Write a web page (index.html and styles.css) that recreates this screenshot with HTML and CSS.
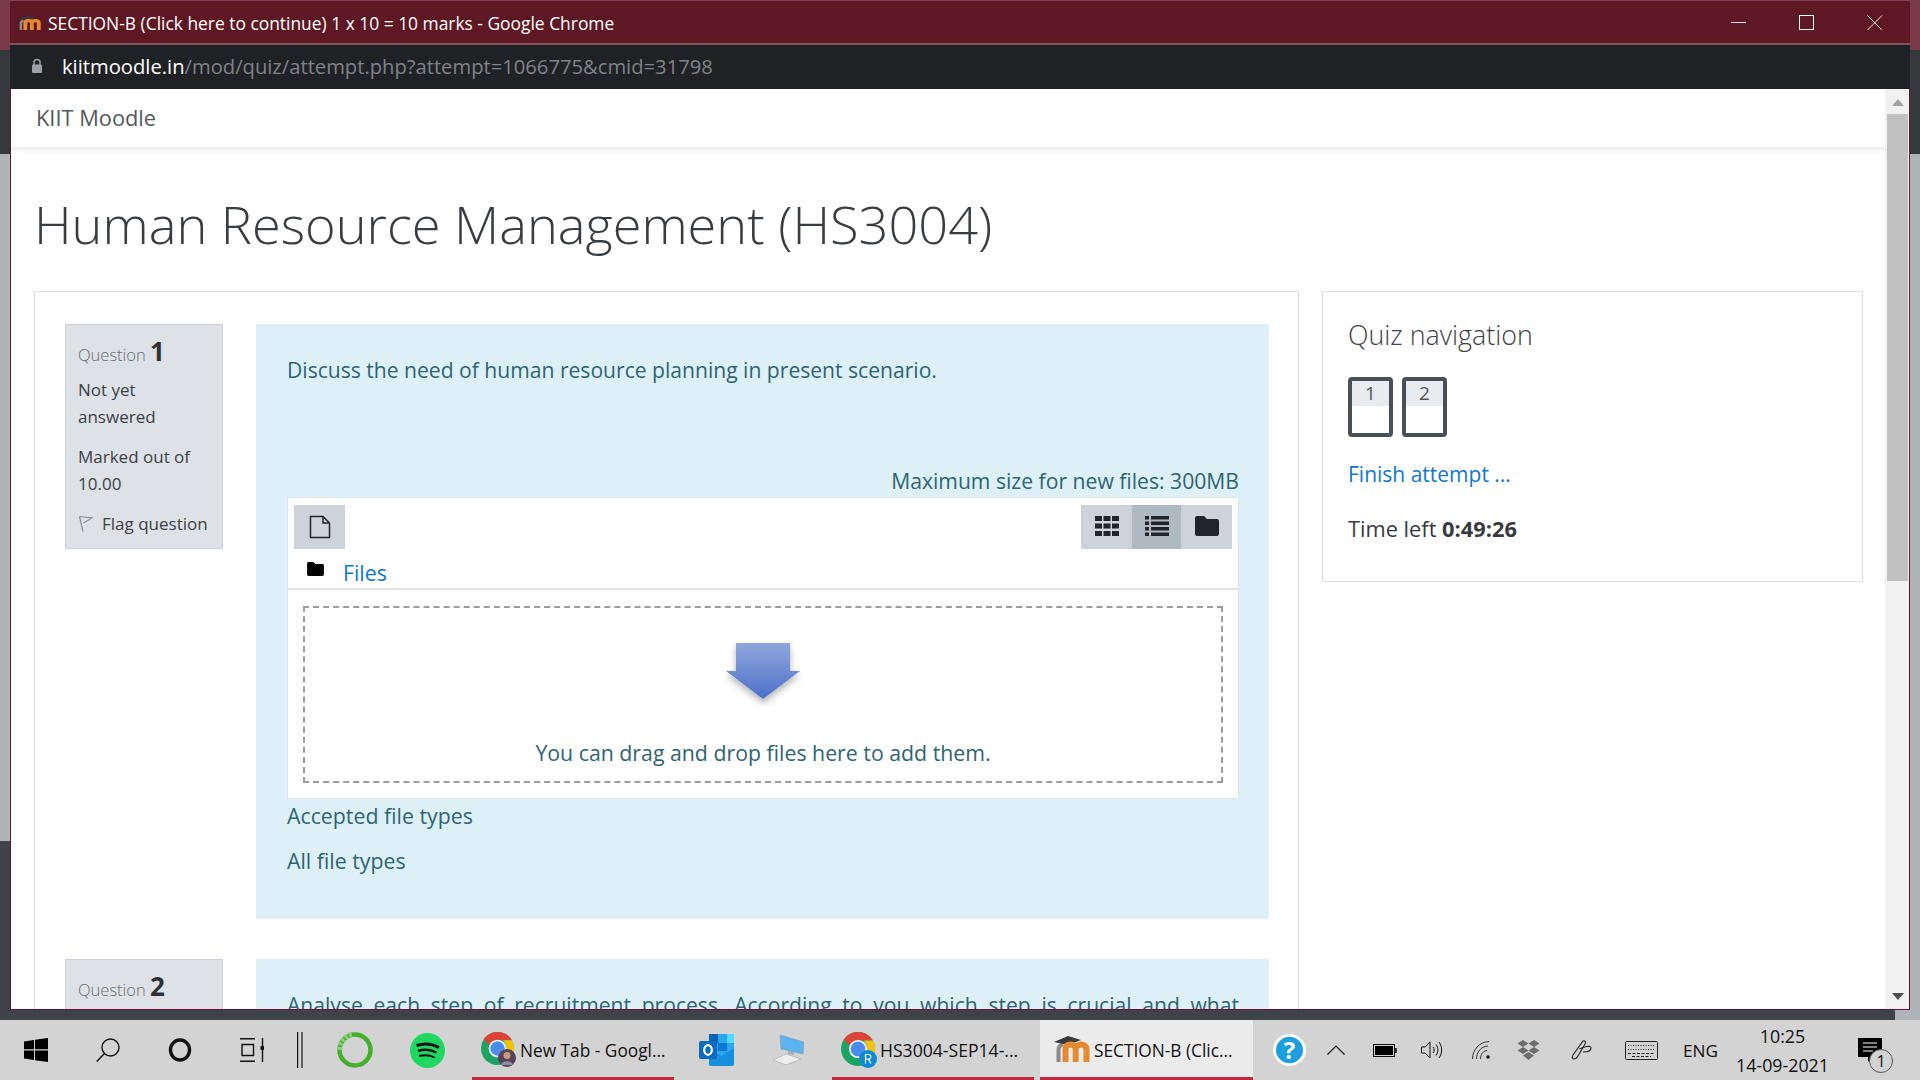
FILE: index.html
```html
<!DOCTYPE html>
<html lang="en">
<head>
<meta charset="utf-8">
<title>SECTION-B (Click here to continue) 1 x 10 = 10 marks</title>
<link rel="stylesheet" href="styles.css">
</head>
<body>
<svg class="defs" width="0" height="0" aria-hidden="true">
  <defs>
    <g id="moodle-m">
      <path d="M4.500 26V14C4.500 11 6.500 9 9 8" fill="none" stroke="#8a8a8a" stroke-width="4"/>
      <path d="M0 6L14 0 27 4 14 9Z" fill="#3a3a3a"/>
      <path d="M11.500 26V13C11.500 10 13.500 8.500 16.500 8.500S21.700 10 21.700 13V26M21.700 13C21.700 10 24 8.500 27 8.500S32.500 10 32.500 13V26" fill="none" stroke="#e68a32" stroke-width="6"/>
    </g>
    <g id="chrome-logo">
      <circle cx="16" cy="16" r="16" fill="#1da462"/>
      <path d="M16 0A16 16 0 0 1 30 8H16A8 8 0 0 0 8.500 13L2.500 7A16 16 0 0 1 16 0Z" fill="#db4437"/>
      <path d="M30 8A16 16 0 0 1 21 31L16 24A8 8 0 0 0 24 16 8 8 0 0 0 21 8Z" fill="#f4c20d"/>
      <circle cx="16" cy="16" r="8.500" fill="#fff"/>
      <circle cx="16" cy="16" r="7" fill="#4a8cf0"/>
    </g>
  </defs>
</svg>
<div class="desktop">
  <main class="window">
    <header class="titlebar">
      <svg class="title-icon" width="23" height="14" viewBox="0 0 36 26" preserveAspectRatio="none"><use href="#moodle-m"/></svg>
      <span class="title-text">SECTION-B (Click here to continue) 1 x 10 = 10 marks - Google Chrome</span>
      <div class="win-controls">
        <svg width="16" height="16" viewBox="0 0 16 16"><path d="M0 7.500H15" stroke="#f3e6e8" fill="none"/></svg>
        <svg width="16" height="16" viewBox="0 0 16 16"><rect x=".5" y=".5" width="14" height="14" stroke="#fff" fill="none"/></svg>
        <svg width="16" height="16" viewBox="0 0 16 16"><path d="M.5.500L15 15M15 .5L.5 15" stroke="#f3e6e8" fill="none"/></svg>
      </div>
    </header>
    <div class="addressbar">
      <svg class="lock" width="12" height="16" viewBox="0 0 12 16"><path d="M3 7V4.500a3 3 0 0 1 6 0V7" fill="none" stroke="#9aa0a6" stroke-width="1.500"/><rect x="1" y="6.500" width="10" height="8.500" rx="1" fill="#9aa0a6"/></svg>
      <span class="url"><span class="url-host">kiitmoodle.in</span>/mod/quiz/attempt.php?attempt=1066775&amp;cmid=31798</span>
    </div>
    <div class="viewport">
      <div class="page">
        <nav class="navbar">KIIT Moodle</nav>
        <h1 class="course-title">Human Resource Management (HS3004)</h1>
        <div class="columns">
          <section class="quiz-card">
            <article class="question">
              <aside class="q-info">
                <h3 class="q-no"><span class="q-label">Question</span> <b>1</b></h3>
                <p class="q-state">Not yet answered</p>
                <p class="q-grade">Marked out of 10.00</p>
                <p class="q-flag">
                  <svg width="16" height="18" viewBox="0 0 16 18"><path d="M1.500 1.500L14 3 5.500 8 M1.500 1.500L5 16.500" fill="none" stroke="#8b8f93" stroke-width="1.200"/></svg>
                  <span>Flag question</span>
                </p>
              </aside>
              <div class="q-content">
                <p class="q-text">Discuss the need of human resource planning in present scenario.</p>
                <p class="max-size">Maximum size for new files: 300MB</p>
                <div class="filemanager">
                  <div class="fm-toolbar">
                    <button class="fm-btn fm-btn-add" type="button">
                      <svg width="22" height="24" viewBox="0 0 22 24"><path d="M1.500 1.500H14L20.500 8V22.500H1.500ZM14 1.500V8H20.500" fill="none" stroke="#23262a" stroke-width="1.500"/></svg>
                    </button>
                    <div class="fm-views">
                      <button class="fm-btn fm-view" type="button">
                        <svg width="24" height="20" viewBox="0 0 24 20" fill="#212529"><path d="M0 0h7v5H0zM8.500 0h7v5h-7zM17 0h7v5h-7zM0 7.500h7v5H0zM8.500 7.500h7v5h-7zM17 7.500h7v5h-7zM0 15h7v5H0zM8.500 15h7v5h-7zM17 15h7v5h-7z"/></svg>
                      </button>
                      <button class="fm-btn fm-view fm-view-on" type="button">
                        <svg width="24" height="20" viewBox="0 0 24 20" fill="#212529"><path d="M0 0h4v3.500H0zM6 0h18v3.500H6zM0 5.500h4V9H0zM6 5.500h18V9H6zM0 11h4v3.500H0zM6 11h18v3.500H6zM0 16.500h4V20H0zM6 16.500h18V20H6z"/></svg>
                      </button>
                      <button class="fm-btn fm-view" type="button">
                        <svg width="24" height="20" viewBox="0 0 24 20" fill="#212529"><path d="M2 0h7l3 3h10a2 2 0 0 1 2 2v13a2 2 0 0 1-2 2H2a2 2 0 0 1-2-2V2a2 2 0 0 1 2-2Z"/></svg>
                      </button>
                    </div>
                  </div>
                  <div class="fm-path">
                    <svg width="17" height="14" viewBox="0 0 24 20" fill="#000"><path d="M2 0h7l3 3h10a2 2 0 0 1 2 2v13a2 2 0 0 1-2 2H2a2 2 0 0 1-2-2V2a2 2 0 0 1 2-2Z"/></svg>
                    <a class="link fm-files" href="#">Files</a>
                  </div>
                  <div class="fm-body">
                    <div class="dropzone">
                      <svg class="drop-arrow" width="80" height="66" viewBox="0 0 80 66">
                        <defs>
                          <linearGradient id="arrowfill" x1="0" y1="0" x2="0" y2="1"><stop offset="0" stop-color="#8fa8dc"/><stop offset="1" stop-color="#4d70c8"/></linearGradient>
                          <filter id="arrowshadow" x="-20%" y="-20%" width="140%" height="150%"><feDropShadow dx="0" dy="4" stdDeviation="3.500" flood-color="#000" flood-opacity=".3"/></filter>
                        </defs>
                        <path d="M13 1H67V29H77L40 57 3 29H13Z" fill="url(#arrowfill)" filter="url(#arrowshadow)"/>
                      </svg>
                      <span class="drop-text">You can drag and drop files here to add them.</span>
                    </div>
                  </div>
                </div>
                <p class="accepted">Accepted file types</p>
                <p class="types">All file types</p>
              </div>
            </article>
            <article class="question">
              <aside class="q-info">
                <h3 class="q-no"><span class="q-label">Question</span> <b>2</b></h3>
              </aside>
              <div class="q-content">
                <p class="q-text q-text-just">Analyse each step of recruitment process. According to you which step is crucial and what</p>
              </div>
            </article>
          </section>
          <aside class="nav-card">
            <h2 class="nav-title">Quiz navigation</h2>
            <div class="nav-buttons">
              <a class="qnbtn" href="#"><span>1</span></a>
              <a class="qnbtn" href="#"><span>2</span></a>
            </div>
            <a class="link finish" href="#">Finish attempt ...</a>
            <p class="time-left">Time left <b>0:49:26</b></p>
          </aside>
        </div>
      </div>
      <div class="scrollbar">
        <svg class="sb-arrow sb-up" width="12" height="7" viewBox="0 0 12 7"><path d="M6 0l6 7H0z" fill="#a3a3a3"/></svg>
        <div class="sb-thumb"></div>
        <svg class="sb-arrow sb-down" width="12" height="7" viewBox="0 0 12 7"><path d="M6 7L12 0H0z" fill="#505050"/></svg>
      </div>
    </div>
  </main>
</div>
<footer class="taskbar">
  <svg class="tb tb-win" width="24" height="24" viewBox="0 0 24 24" fill="#000"><path d="M0 3.500L10 2V11.300H0ZM11 1.800L24 0V11.300H11ZM0 12.500H10V22L0 20.500ZM11 12.500H24V24L11 22.200Z"/></svg>
  <svg class="tb tb-search" width="24" height="24" viewBox="0 0 24 24" fill="none" stroke="#111" stroke-width="1.400"><circle cx="14.500" cy="9.500" r="8.500"/><path d="M8.500 15.500L.7 23.500"/></svg>
  <svg class="tb tb-cortana" width="24" height="24" viewBox="0 0 24 24" fill="none" stroke="#111" stroke-width="3.400"><ellipse cx="12" cy="12" rx="9.500" ry="10"/></svg>
  <svg class="tb tb-task" width="24" height="24" viewBox="0 0 24 24" fill="none" stroke="#111" stroke-width="1.400"><path d="M0 .7H15M0 23.300H15M2 6.500H13.500V17.500H2ZM22.500 0V24"/><rect x="20.500" y="8" width="4" height="4" fill="#111" stroke="none"/></svg>
  <svg class="tb tb-sep" width="6" height="36" viewBox="0 0 6 36" fill="none" stroke="#111" stroke-width="1.200"><path d="M.6 0V36M5 0V36"/></svg>
  <svg class="tb tb-ring" width="36" height="36" viewBox="0 0 36 36" fill="none"><circle cx="18" cy="18" r="15.500" stroke="#45b02e" stroke-width="4.500"/><path d="M3 18C3 10 8 4 15 2.500" stroke="#8fce7e" stroke-width="5" stroke-dasharray="3 1.500"/></svg>
  <svg class="tb tb-spotify" width="35" height="35" viewBox="0 0 35 35" fill="none"><circle cx="17.500" cy="17.500" r="17.500" fill="#1ed760"/><path d="M6.500 12.500C14 10 22 10.500 29 14.500" stroke="#111" stroke-width="3"/><path d="M8 18C14 16 21 16.500 26.500 19.500" stroke="#111" stroke-width="2.500"/><path d="M9 23C14 21.700 20 22 24.500 24.500" stroke="#111" stroke-width="2"/></svg>
  <div class="tb-app tb-app-newtab">
    <span class="tb-logo">
      <svg width="33" height="33" viewBox="0 0 32 32"><use href="#chrome-logo"/></svg>
      <svg class="tb-badge" width="18" height="18" viewBox="0 0 18 18"><circle cx="9" cy="9" r="9" fill="#5a4256"/><circle cx="9" cy="6.500" r="3.500" fill="#c49a82"/><path d="M3 16c1-5 11-5 12 0" fill="#8d8ea0"/></svg>
    </span>
    <span class="tb-label">New Tab - Googl...</span>
  </div>
  <svg class="tb tb-outlook" width="35" height="32" viewBox="0 0 35 32"><rect x="10" y="0" width="25" height="26" rx="2" fill="#28a8ea"/><rect x="10" y="0" width="9" height="9" fill="#0364b8"/><rect x="19" y="9" width="9" height="8" fill="#0f78d4"/><rect x="28" y="0" width="7" height="9" fill="#50d9ff"/><path d="M10 14l12.500 8L35 14V30a2 2 0 0 1-2 2H12a2 2 0 0 1-2-2Z" fill="#1490df"/><rect x="0" y="7" width="18" height="18" rx="2" fill="#0f6cbd"/><ellipse cx="9" cy="16" rx="3.800" ry="4.800" fill="none" stroke="#fff" stroke-width="2.200"/></svg>
  <svg class="tb tb-computer" width="31" height="30" viewBox="0 0 31 30"><path d="M7 0L31 7 30 19 8 14Z" fill="#5cb4ee" stroke="#8a9aa8" stroke-width=".6"/><path d="M15 15.500L21 17 21 20 15 19Z" fill="#a8acb0"/><path d="M0 25L13 19 28 24 13 30Z" fill="#eeeeee" stroke="#b0b0b0" stroke-width=".7"/></svg>
  <div class="tb-app tb-app-hs">
    <span class="tb-logo">
      <svg width="34" height="34" viewBox="0 0 32 32"><use href="#chrome-logo"/></svg>
      <svg class="tb-badge" width="18" height="18" viewBox="0 0 18 18"><circle cx="9" cy="9" r="9" fill="#0f8ad6"/><path d="M6.500 13.500V4.500H10A2.400 2.400 0 0 1 10 9.200H6.500M9.500 9.200L12 13.500" fill="none" stroke="#fff" stroke-width="1.200"/></svg>
    </span>
    <span class="tb-label">HS3004-SEP14-...</span>
  </div>
  <div class="tb-app tb-app-active">
    <svg class="tb-moodle" width="36" height="26" viewBox="0 0 36 26"><use href="#moodle-m"/></svg>
    <span class="tb-label">SECTION-B (Clic...</span>
  </div>
  <svg class="tb tb-help" width="33" height="32" viewBox="0 0 33 32"><ellipse cx="16.500" cy="16" rx="16.500" ry="16" fill="#fff"/><ellipse cx="16.500" cy="16" rx="13.500" ry="13.200" fill="#1b9fdf"/><text x="16.500" y="24.500" text-anchor="middle" class="help-q">?</text></svg>
  <svg class="tb tb-chev" width="18" height="10" viewBox="0 0 18 10" fill="none" stroke="#111" stroke-width="1.200"><path d="M.5 9.500L9 1l8.500 8.500"/></svg>
  <svg class="tb tb-batt" width="24" height="13" viewBox="0 0 24 13"><rect x=".5" y=".5" width="21" height="12" fill="none" stroke="#111"/><rect x="2" y="2" width="18" height="9" fill="#000"/><rect x="22" y="4" width="2" height="5" fill="#333"/></svg>
  <svg class="tb tb-speaker" width="22" height="18" viewBox="0 0 22 18" fill="none" stroke="#111"><path d="M.5 6H4L9 1V17L4 12H.5Z"/><path d="M12 6C13.500 8 13.500 10 12 12M15 3.500C17.500 7 17.500 11 15 14.500M18 1C21.500 6 21.500 12 18 17"/></svg>
  <svg class="tb tb-wifi" width="18" height="18" viewBox="0 0 18 18" fill="none" stroke="#333"><path d="M.5 18C.5 9 7 1 17 .5M4.500 18C4.500 11 9 5.500 16 5M8.500 18C8.500 13.500 11 10 15 9.500"/><circle cx="16" cy="16" r="1.800" fill="#111" stroke="none"/></svg>
  <svg class="tb tb-dropbox" width="23" height="20" viewBox="0 0 23 20" fill="#6d6d6d"><path d="M6 0l5.500 3.500L6 7 .5 3.500ZM17 0l5.500 3.500L17 7l-5.500-3.500ZM6 7l5.500 3.500L6 14 .5 10.500ZM17 7l5.500 3.500L17 14l-5.500-3.500ZM11.500 12L17 15.500 11.500 20 6 15.500Z"/></svg>
  <svg class="tb tb-pen" width="21" height="20" viewBox="0 0 21 20" fill="none" stroke="#222" stroke-width="1.100"><path d="M12 1c2-1 3 1 2 3L7 16c-1 2-3 3-4.500 3s-1.500-2-.5-4Z"/><path d="M8.500 9c4-2.500 11.500-4 11.500-1s-4 4-8 4"/></svg>
  <svg class="tb tb-kbd" width="33" height="19" viewBox="0 0 33 19" fill="none" stroke="#222"><rect x=".5" y=".5" width="32" height="18" rx="1"/><path d="M3 4.500H30M3 8.500H30" stroke-dasharray="1 1.500"/><path d="M3 12.500H30M7 15.500H26" stroke-dasharray="3 1.500"/></svg>
  <span class="tb-eng">ENG</span>
  <div class="tb-clock"><span>10:25</span><span>14-09-2021</span></div>
  <div class="tb-notif">
    <svg width="24" height="24" viewBox="0 0 24 24"><path d="M0 0H24V19H14L10 24V19H0Z" fill="#000"/><path d="M5 5H19M5 9H19M5 13H15" stroke="#fff" stroke-width="1.200"/></svg>
    <span class="tb-count">1</span>
  </div>
</footer>
</body>
</html>
```
FILE: styles.css
```css
* { box-sizing: border-box; }
html, body { margin: 0; height: 100%; }
body {
  width: 1920px;
  height: 1080px;
  overflow: hidden;
  display: flex;
  flex-direction: column;
  font-family: "Open Sans", "Noto Sans", sans-serif;
  color: #373a3c;
  background: #36393c;
}
p, h1, h2, h3 { margin: 0; font-weight: 400; }
a { text-decoration: none; }
button { border: 0; padding: 0; font: inherit; }
.defs { position: absolute; }

.desktop {
  height: 1020px;
  flex: none;
  padding: 0 10px 10px;
  background-image:
    linear-gradient(#7a3a48 0 50px, #36393c 50px 154px, #b1b4b7 154px 841px, #3e4347 841px),
    linear-gradient(#7a3a48 0 50px, #36393c 50px 154px, #b1b4b7 154px);
  background-size: 1895px 100%, 25px 100%;
  background-position: left top, right top;
  background-repeat: no-repeat;
}
.window {
  height: 1010px;
  display: flex;
  flex-direction: column;
  background: #fff;
}
.titlebar {
  height: 45px;
  flex: none;
  display: flex;
  align-items: center;
  background: #5e1824;
  border-top: 1px solid #7c4150;
  border-bottom: 2px solid #84505c;
  padding: 2px 0 0 8px;
  color: #fff;
  font-size: 17.400px;
}
.title-icon { margin-right: 7px; }
.title-text { flex: 1; white-space: nowrap; }
.win-controls { display: flex; gap: 52px; padding-right: 27px; }
.addressbar {
  height: 44px;
  flex: none;
  display: flex;
  align-items: center;
  background: #202124;
  padding: 0 0 2px 21px;
  font-size: 20.200px;
  color: #7f8387;
}
.url { margin-left: 19px; white-space: nowrap; }
.url-host { color: #fff; }

.viewport {
  flex: 1;
  min-height: 0;
  display: flex;
  overflow: hidden;
  border: 1px solid #6b1430;
  border-top: 0;
}
.page { flex: 1; min-width: 0; overflow: hidden; }
.navbar {
  height: 58px;
  padding: 0 0 2px 25px;
  display: flex;
  align-items: center;
  font-size: 21.800px;
  color: #54575a;
  box-shadow: 0 2px 6px rgba(0, 0, 0, .1);
}
.course-title {
  margin: 39px 0 0 23px;
  height: 105px;
  font-size: 52.300px;
  line-height: 75px;
  font-weight: 300;
  color: #3a3d40;
  white-space: nowrap;
}
.columns {
  display: flex;
  align-items: flex-start;
  padding-left: 23px;
  gap: 23px;
  font-size: 21.300px;
}
.quiz-card {
  width: 1265px;
  flex: none;
  border: 1px solid #dfdfdf;
  padding: 32px 29px 0 30px;
  display: flex;
  flex-direction: column;
  gap: 40px;
}
.question { display: flex; gap: 33px; align-items: flex-start; }
.q-info {
  width: 158px;
  flex: none;
  padding: 10px 12px 11px;
  background: #dee2e6;
  border: 1px solid #cad0d7;
  font-size: 17px;
  line-height: 27px;
  color: #3c4045;
}
.q-no { font-size: 16.500px; line-height: 33px; margin-bottom: 5px; }
.q-label { color: #6a6d70; font-weight: 300; }
.q-no b { font-size: 26px; font-weight: 700; color: #2f3235; }
.q-grade { margin-top: 13px; }
.q-flag { margin-top: 13px; display: flex; align-items: center; gap: 8px; white-space: nowrap; }
.q-content {
  width: 1013px;
  flex: none;
  padding: 30px 30px 30px 31px;
  background: #def0f7;
  color: #2f6473;
}
.q-text { line-height: 32px; font-size: 21.100px; }
.q-text-just { text-align: justify; text-align-last: justify; white-space: nowrap; }
.max-size { margin-top: 79px; text-align: right; line-height: 32px; font-size: 21.150px; }
.filemanager {
  height: 302px;
  background: #fff;
  border: 1px solid #dfe3e6;
  display: flex;
  flex-direction: column;
}
.fm-toolbar {
  flex: none;
  display: flex;
  justify-content: space-between;
  padding: 7px 6px 0;
}
.fm-btn {
  width: 51px;
  height: 44px;
  display: flex;
  align-items: center;
  justify-content: center;
  background: #ced3da;
}
.fm-view { padding-bottom: 2px; }
.fm-views { display: flex; }
.fm-view-on { background: #aeb9c2; width: 49px; }
.fm-path {
  height: 41px;
  flex: none;
  display: flex;
  align-items: center;
  gap: 19px;
  padding-left: 19px;
  border-bottom: 2px solid #e2e2e2;
}
.fm-files { margin-top: 7px; }
.link { color: #1177d1; }
.fm-body { flex: 1; padding: 16px 15px 15px; }
.dropzone {
  height: 100%;
  border: 2px dashed #9a9c9e;
  display: flex;
  flex-direction: column;
  align-items: center;
  padding-top: 34px;
  color: #2f6473;
}
.drop-text { margin-top: 29px; line-height: 32px; }
.accepted { margin-top: 1px; line-height: 32px; }
.types { margin-top: 13px; line-height: 32px; padding-bottom: 12px; }

.nav-card {
  width: 541px;
  height: 291px;
  flex: none;
  border: 1px solid #dfdfdf;
  padding: 24px 24px 0 25px;
}
.nav-title { font-size: 26.800px; font-weight: 300; line-height: 38px; color: #3f4246; }
.nav-buttons { display: flex; gap: 9px; margin-top: 23px; }
.qnbtn {
  width: 45px;
  height: 60px;
  border: 4px solid #484f56;
  border-radius: 4px;
  background: linear-gradient(#e9ecef 0 25px, #fff 25px);
  color: #555;
  font-size: 19px;
  line-height: 24px;
  text-align: center;
}
.qnbtn span { display: block; }
.finish { display: block; margin-top: 21px; line-height: 32px; font-size: 21px; }
.time-left { margin-top: 23px; line-height: 32px; color: #373a3c; font-size: 21.800px; }
.time-left b { font-weight: 700; }

.scrollbar {
  width: 24px;
  flex: none;
  padding-left: 1px;
  background: #f1f1f1;
  display: flex;
  flex-direction: column;
  align-items: center;
}
.sb-arrow { flex: none; }
.sb-up { margin: 10px 0 8px; }
.sb-down { margin-bottom: 9px; }
.sb-thumb { width: 21px; height: 467px; flex: none; background: #c1c1c1; margin-bottom: auto; }

.taskbar {
  height: 60px;
  flex: none;
  display: flex;
  align-items: center;
  position: relative;
  background: #d3d3d3;
  color: #111;
  font-size: 17.300px;
}
.tb { flex: none; }
.tb-win { margin-left: 24px; }
.tb-search { margin-left: 48px; }
.tb-cortana { margin-left: 48px; }
.tb-task { margin-left: 48px; }
.tb-sep { margin-left: 33px; }
.tb-ring { margin-left: 34px; }
.tb-spotify { margin-left: 37px; }
.tb-app {
  height: 60px;
  flex: none;
  display: flex;
  align-items: center;
  border-bottom: 3px solid #c4283f;
  white-space: nowrap;
}
.tb-logo { position: relative; display: flex; }
.tb-badge { position: absolute; right: -2px; bottom: -2px; }
.tb-label { margin: 3px 0 0 6px; }
.tb-app-newtab { margin-left: 27px; width: 202px; padding-left: 9px; }
.tb-outlook { margin-left: 25px; }
.tb-computer { margin-left: 39px; }
.tb-app-hs { margin-left: 28px; width: 202px; padding-left: 9px; font-size: 17.600px; }
.tb-app-hs .tb-label { margin-left: 5px; }
.tb-app-active { margin-left: 6px; width: 213px; padding-left: 14px; background: #ebebeb; }
.tb-moodle { flex: none; }
.tb-app-active .tb-label { margin-left: 4px; }
.tb-help { margin-left: 20px; }
.help-q { font-family: "Open Sans", sans-serif; font-weight: 700; font-size: 24px; fill: #fff; }
.tb-chev { margin-left: 21px; }
.tb-batt { margin-left: 28px; }
.tb-speaker { margin-left: 24px; }
.tb-wifi { margin-left: 29px; }
.tb-dropbox { margin-left: 27px; }
.tb-pen { margin-left: 31px; }
.tb-kbd { margin-left: 33px; }
.tb-eng { margin-left: 25px; width: 32px; font-size: 17.200px; flex: none; }
.tb-clock {
  width: 91px;
  flex: none;
  margin-left: 22px;
  padding-top: 2px;
  display: flex;
  flex-direction: column;
  align-items: center;
  font-size: 17.800px;
  line-height: 29px;
  white-space: nowrap;
}
.tb-notif { margin-left: 30px; position: relative; display: flex; }
.tb-count {
  position: absolute;
  left: 11px;
  top: 11px;
  width: 24px;
  height: 24px;
  border-radius: 50%;
  border: 1px solid #555;
  background: #d3d3d3;
  text-align: center;
  font-size: 16px;
  line-height: 22px;
}
```
